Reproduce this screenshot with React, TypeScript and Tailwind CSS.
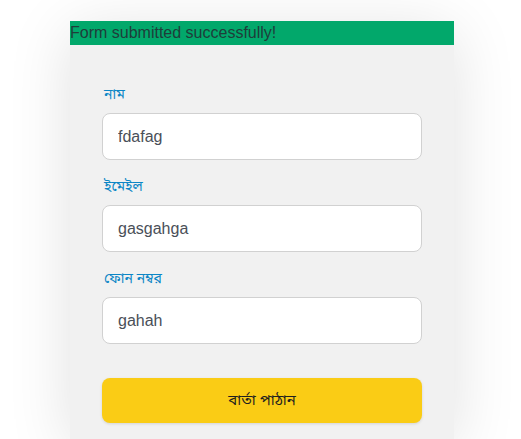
import { useState } from "react";

const fields = [
  { label: "নাম", value: "fdafag", type: "text" },
  { label: "ইমেইল", value: "gasgahga", type: "email" },
  { label: "ফোন নম্বর", value: "gahah", type: "tel" },
];

export default function App() {
  const [values, setValues] = useState(fields.map((f) => f.value));

  return (
    <div className="min-h-screen bg-white pt-[21px] font-['Liberation_Sans',Arial,'Noto_Sans_Bengali',sans-serif]">
      <div className="ml-[70px] w-96 bg-[#f1f1f1] shadow-[0_10px_60px_rgba(0,0,0,0.12)]">
        <div className="h-6 bg-[#02a86b] text-base leading-6 text-[#1f3d3a]">Form submitted successfully!</div>
        <form className="px-8 pt-[39px] pb-4" onSubmit={(e) => e.preventDefault()}>
          {fields.map((f, i) => (
            <div key={f.label} className="mb-4">
              <label className="mb-[9px] block pl-[2px] text-sm leading-5 text-[#0b86c6]">{f.label}</label>
              <input
                type={f.type}
                value={values[i]}
                onChange={(e) => setValues(values.map((v, j) => (j === i ? e.target.value : v)))}
                className="h-[47px] w-full rounded-lg border border-[#d1d1d1] bg-white px-[15px] text-base text-[#4a4f58] outline-none"
              />
            </div>
          ))}
          <button
            type="submit"
            className="mt-[18px] h-[45px] w-full rounded-lg bg-[#facc15] text-[15px] text-[#1f1f1f] shadow-[0_1px_3px_rgba(0,0,0,0.12)]"
          >
            বার্তা পাঠান
          </button>
        </form>
      </div>
    </div>
  );
}
